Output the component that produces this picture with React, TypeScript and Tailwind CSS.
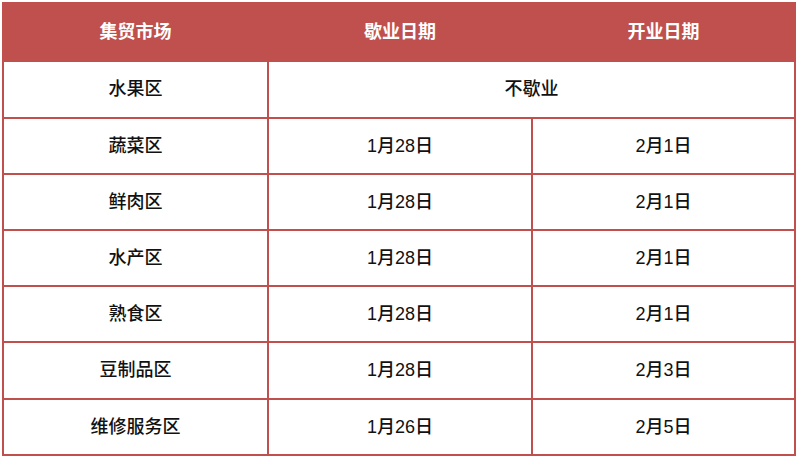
const rows = [
  { name: "蔬菜区", close: "1月28日", open: "2月1日" },
  { name: "鲜肉区", close: "1月28日", open: "2月1日" },
  { name: "水产区", close: "1月28日", open: "2月1日" },
  { name: "熟食区", close: "1月28日", open: "2月1日" },
  { name: "豆制品区", close: "1月28日", open: "2月3日" },
  { name: "维修服务区", close: "1月26日", open: "2月5日" },
]

const heights = ["h-[56px]", "h-[56px]", "h-[56px]", "h-[56px]", "h-[57px]", "h-[56px]"]

export default function App() {
  return (
    <div className="w-[800px] h-[468px] bg-white p-[2px] font-['Liberation_Sans','Noto_Sans_CJK_SC',sans-serif]">
      <table className="w-[792px] border-collapse table-fixed text-[18px] text-[#111]">
        <colgroup>
          <col className="w-[265px]" />
          <col className="w-[264px]" />
          <col className="w-[263px]" />
        </colgroup>
        <thead>
          <tr className="h-[58px] bg-[#c0504d] text-white font-bold">
            <th className="border-2 border-[#c0504d] text-center">集贸市场</th>
            <th className="border-2 border-[#c0504d] text-center">歇业日期</th>
            <th className="border-2 border-[#c0504d] text-center">开业日期</th>
          </tr>
        </thead>
        <tbody className="font-medium">
          <tr className="h-[57px]">
            <td className="border-2 border-[#c0504d] text-center">水果区</td>
            <td colSpan={2} className="border-2 border-[#c0504d] text-center">
              不歇业
            </td>
          </tr>
          {rows.map((r, i) => (
            <tr key={r.name} className={heights[i]}>
              <td className="border-2 border-[#c0504d] text-center">{r.name}</td>
              <td className="border-2 border-[#c0504d] text-center">{r.close}</td>
              <td className="border-2 border-[#c0504d] text-center">{r.open}</td>
            </tr>
          ))}
        </tbody>
      </table>
    </div>
  )
}
